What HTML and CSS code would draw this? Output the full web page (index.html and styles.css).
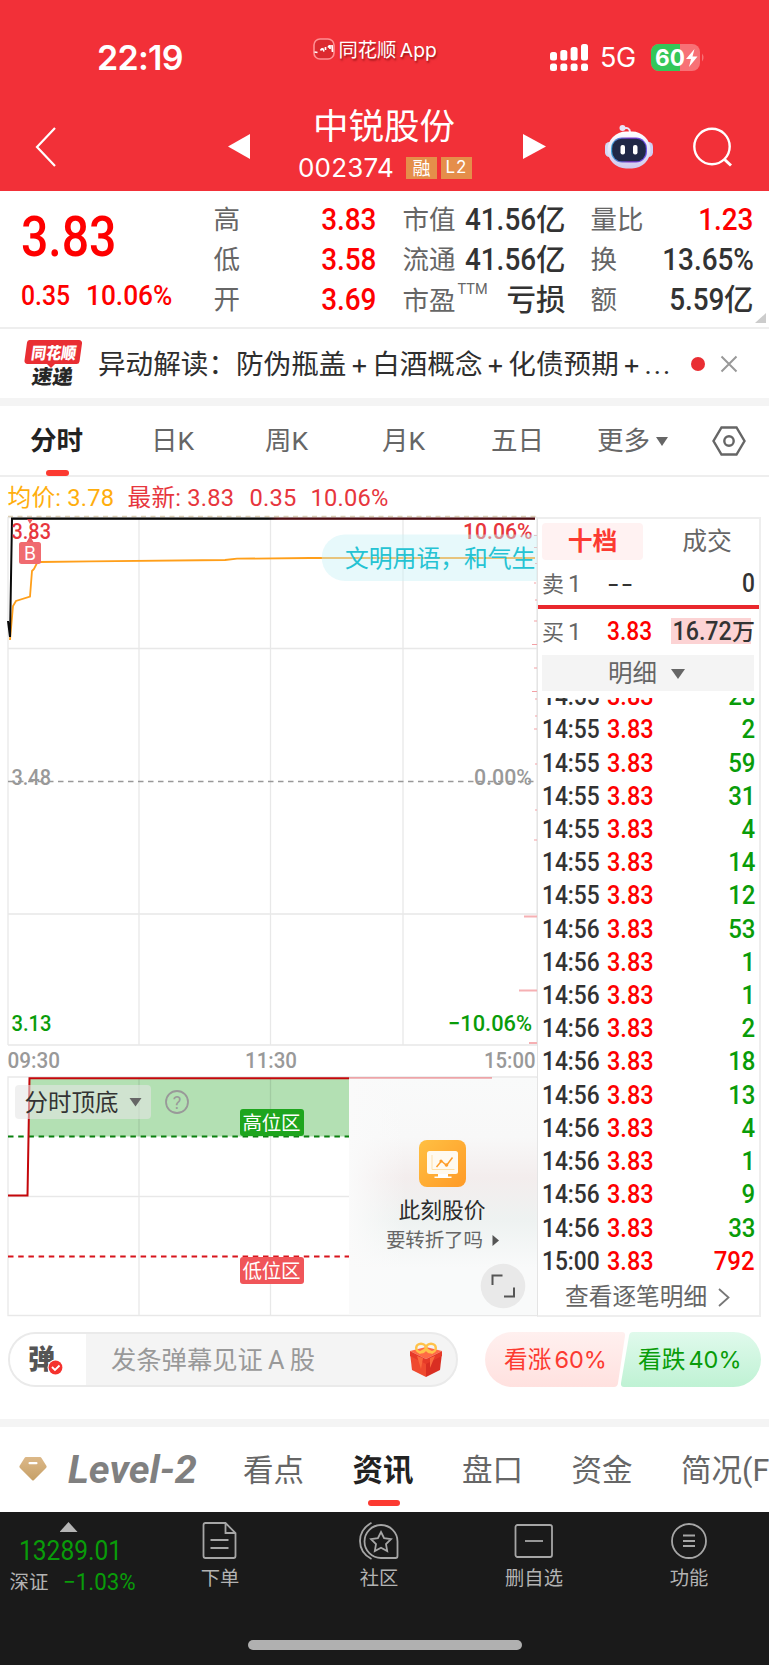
FILE: index.html
```html
<!DOCTYPE html>
<html lang="zh-CN">
<head>
<meta charset="utf-8">
<title>中锐股份 002374</title>
<link rel="stylesheet" href="styles.css">
</head>
<body>
<header class="header">
  <div class="status">
    <span class="clock">22:19</span>
    <div class="app-name">
      <svg width="22" height="22" viewBox="0 0 22 22"><rect x="1" y="1" width="20" height="20" rx="6" fill="#dc2a30" stroke="#ff8f92" stroke-width="1.6"/><path d="M1.500 14l3 .5M7.500 12.500l1.500-2M9.500 10l1.500 3.500M12.500 9v3M15 9.500l1.500-2M17 7v4M19 7l.5 7" fill="none" stroke="#fff" stroke-width="1.700"/></svg>
      <span>同花顺 App</span>
    </div>
    <svg class="signal" width="39" height="28" viewBox="0 0 39 28" fill="#fff"><rect x="0" y="8" width="7" height="8.500" rx="2.500"/><rect x="10.300" y="6" width="7" height="10.500" rx="2.500"/><rect x="20.600" y="3" width="7" height="13.500" rx="2.500"/><rect x="31" y="0" width="7" height="16.500" rx="2.500"/><rect x="0" y="19.500" width="7" height="7.500" rx="2.500"/><rect x="10.300" y="19.500" width="7" height="7.500" rx="2.500"/><rect x="20.600" y="19.500" width="7" height="7.500" rx="2.500"/><rect x="31" y="19.500" width="7" height="7.500" rx="2.500"/></svg>
    <span class="net">5G</span>
    <svg class="battery" width="54" height="27" viewBox="0 0 54 27"><defs><clipPath id="bat"><rect width="49" height="27" rx="8"/></clipPath></defs><g clip-path="url(#bat)"><rect width="49" height="27" fill="#f77176"/><rect width="29" height="27" fill="#34c759"/></g><path d="M51 9.500q3 4 0 8z" fill="#f77176"/><text x="4" y="21.500" textLength="30" lengthAdjust="spacingAndGlyphs" font-family="Inter" font-weight="700" font-size="22.500" fill="#fff">60</text><path d="M43.500 5L35 15h5l-2 8 8.500-10.500h-5z" fill="#fff"/></svg>
  </div>
  <nav class="nav">
    <svg class="back" width="22" height="40" viewBox="0 0 22 40" fill="none" stroke="#fff" stroke-width="2.200"><path d="M20 1L2 20l18 19"/></svg>
    <svg class="prev" width="22" height="25" viewBox="0 0 22 25"><path d="M22 0v25L0 12.500z" fill="#fff"/></svg>
    <div class="title">
      <h1>中锐股份</h1>
      <div class="code"><span>002374</span><b>融</b><b class="lv">L2</b></div>
    </div>
    <svg class="next" width="23" height="25" viewBox="0 0 23 25"><path d="M0 0v25l23-12.500z" fill="#fff"/></svg>
    <svg class="robot" width="48" height="44" viewBox="0 0 48 44">
      <defs><linearGradient id="rb" x1="0" y1="0" x2="0" y2="1"><stop offset="0" stop-color="#fff"/><stop offset="1" stop-color="#cfc9ee"/></linearGradient><linearGradient id="rf" x1="0" y1="0" x2="1" y2="0"><stop offset="0" stop-color="#3fa5d8"/><stop offset=".5" stop-color="#7a34c8"/><stop offset="1" stop-color="#6a55e8"/></linearGradient></defs>
      <path d="M18 3.500q7-2 7 4" fill="none" stroke="#eae6fa" stroke-width="2"/><circle cx="17.500" cy="3" r="3" fill="#e8e4f8"/>
      <rect x="0" y="17" width="9" height="15" rx="4.500" fill="#d3d8f4"/><rect x="39" y="17" width="9" height="15" rx="4.500" fill="#d0cef4"/>
      <rect x="2.500" y="6.500" width="43" height="37" rx="18.500" fill="url(#rb)"/><rect x="6" y="12.500" width="36" height="25" rx="11" fill="url(#rf)"/><rect x="7.200" y="13.800" width="33.600" height="22.400" rx="9.500" fill="#202846"/>
      <rect x="15.500" y="20" width="4.500" height="9.500" rx="2" fill="#fff"/><rect x="28" y="20" width="4.500" height="9.500" rx="2" fill="#fff"/>
    </svg>
    <svg class="search" width="42" height="42" viewBox="0 0 42 42" fill="none" stroke="#fff" stroke-width="2.400"><circle cx="20" cy="20.500" r="17.700"/><path d="M32 33l7 6.500" stroke-width="3"/></svg>
  </nav>
</header>

<section class="quote">
  <div class="price">
    <div class="last din">3.83</div>
    <div class="change"><span class="din">0.35</span><span class="din">10.06%</span></div>
  </div>
  <dl class="col c1">
    <dt>高</dt><dd class="red"><span class="din">3.83</span></dd>
    <dt>低</dt><dd class="red"><span class="din">3.58</span></dd>
    <dt>开</dt><dd class="red"><span class="din">3.69</span></dd>
  </dl>
  <dl class="col c2">
    <dt>市值</dt><dd><span class="din">41.56</span>亿</dd>
    <dt>流通</dt><dd><span class="din">41.56</span>亿</dd>
    <dt class="low">市盈<sup>TTM</sup></dt><dd>亏损</dd>
  </dl>
  <dl class="col c3">
    <dt>量比</dt><dd class="red"><span class="din">1.23</span></dd>
    <dt>换</dt><dd><span class="din">13.65%</span></dd>
    <dt>额</dt><dd><span class="din">5.59</span>亿</dd>
  </dl>
  <i class="corner"></i>
</section>

<section class="news">
  <div class="express">
    <svg width="60" height="50" viewBox="0 0 60 50"><path d="M5.500 1h49.500a3 3 0 0 1 3 3.500l-2.500 18a3 3 0 0 1-3 2.500H31l-4 4-4-4H3.500a3 3 0 0 1-3-3.500L3 3.500A3 3 0 0 1 5.500 1z" fill="#e92e33"/><g font-family="Noto Sans CJK SC" font-weight="900"><text transform="translate(6.500 19.500) skewX(-8)" font-size="16.500" textLength="45" lengthAdjust="spacingAndGlyphs" fill="#fff">同花顺</text><text transform="translate(7 45) skewX(-8)" font-size="20" textLength="41" lengthAdjust="spacingAndGlyphs" fill="#262626">速递</text></g></svg>
  </div>
  <p>异动解读：防伪瓶盖<i>+</i>白酒概念<i>+</i>化债预期<i>+</i><em>...</em></p>
  <span class="dot"></span>
  <svg class="close" width="18" height="18" viewBox="0 0 18 18" stroke="#999" stroke-width="2"><path d="M1.500 1.500l15 15M16.500 1.500l-15 15"/></svg>
</section>

<nav class="periods">
  <span class="on">分时</span><span>日K</span><span>周K</span><span>月K</span><span>五日</span>
  <span class="more">更多<i class="tri"></i></span>
  <svg width="34" height="30" viewBox="0 0 34 30" fill="none" stroke="#666" stroke-width="2.400"><path d="M9.500 1.500h15L32.500 15l-8 13.500h-15L1.500 15z"/><circle cx="17" cy="15" r="4.700"/></svg>
</nav>

<div class="legend"><span class="avg">均价: 3.78</span><span>最新: 3.83</span><span>0.35</span><span>10.06%</span></div>

<main class="board">
  <div class="charts">
    <svg class="chart" width="538" height="800" viewBox="0 516 538 800" font-family="Roboto, sans-serif">
      <defs>
        <linearGradient id="line" x1="0" x2="1"><stop offset=".49" stop-color="#0a0a0a"/><stop offset=".51" stop-color="#4d0c12"/></linearGradient>
        <linearGradient id="mist" x1="0" y1="0" x2="0" y2="1"><stop offset="0" stop-color="#f9fafa"/><stop offset=".25" stop-color="#f8f8f8"/><stop offset=".42" stop-color="#f3eded"/><stop offset=".6" stop-color="#eef2f1"/><stop offset=".8" stop-color="#f9fafa"/></linearGradient>
        <linearGradient id="fade" x1="0" x2="1"><stop offset="0" stop-color="#fafafa"/><stop offset=".3" stop-color="#fafafa" stop-opacity="0"/></linearGradient>
        <linearGradient id="app" x1="0" y1="0" x2="1" y2="1"><stop offset="0" stop-color="#ffc043"/><stop offset="1" stop-color="#ff9a26"/></linearGradient>
      </defs>
      <g fill="none" stroke="#e8e8e8" stroke-width="1.300">
        <path d="M8 517.500H537M8 1045H537V517M8 517V1045M139 517V1045M270.500 517V1045M403 517V1045M8 648.500H537M8 914H537"/>
      </g>
      <path d="M8 781.500H537" stroke="#999" stroke-width="1.500" stroke-dasharray="5.500 4.500"/>
      <path d="M8 516.500H537" stroke="#dccfb5" stroke-width="1.500" stroke-dasharray="5 4.500"/>
      <path d="M10 640L13 606 16 601 30 596.500 32 571 34 569 37 563 40 562 90 561.300 225 560 237 558.700 310 558 535 558" fill="none" stroke="#ff9f1a" stroke-width="1.800"/>
      <path d="M8 621L10 637 12 519" fill="none" stroke="#0a0a0a" stroke-width="2"/>
      <rect x="11" y="517.500" width="524" height="2.300" fill="url(#line)"/>
      <g stroke="#f3a0a4" stroke-width="1.200"><path d="M534 535.500h3M534 547.500h3M535 563.500h2M534 583h2M535 600h2M534 621h3M532 644.500h5M534 668h3M532 691.500h5M535 699h2M535 716h2M534 729h3M535 764h2M534 840h3M535 810h2"/><path d="M524 916.500h13M519 990.500h18M529 1043h8" stroke-width="2" stroke="#f6b0b3"/></g>
      <g fill="#e7363d" font-size="22.500" font-weight="500"><text x="11.500" y="539" textLength="39.500" lengthAdjust="spacingAndGlyphs">3.83</text><text x="463" y="539" textLength="69.500" lengthAdjust="spacingAndGlyphs">10.06%</text></g>
      <path d="M27 519h6l-3 5zM26 543h8l-4-7z" fill="#e7363d" opacity=".8"/>
      <rect x="19" y="542" width="22" height="22" rx="2.500" fill="#f06b70"/><text x="24" y="560" font-family="Inter" font-size="19" textLength="12" lengthAdjust="spacingAndGlyphs" fill="#fff">B</text>
      <path d="M345 534.500H537V581H345a23.250 23.250 0 0 1 0-46.500z" fill="#c9f2f7" opacity=".45"/>
      <text x="345" y="566.500" font-family="Noto Sans CJK SC" font-size="23.800" fill="#25c3d3">文明用语，和气生</text>
      <g fill="#999" font-size="22.500" font-weight="500"><text x="11.500" y="785" textLength="39.500" lengthAdjust="spacingAndGlyphs">3.48</text><text x="474" y="785" textLength="58" lengthAdjust="spacingAndGlyphs">0.00%</text></g>
      <g fill="#099c09" font-size="22.500" font-weight="500"><text x="11.500" y="1031" textLength="40" lengthAdjust="spacingAndGlyphs">3.13</text><text x="448" y="1031" textLength="84" lengthAdjust="spacingAndGlyphs">−10.06%</text></g>
      <g fill="#999" font-size="22.500" font-weight="500"><text x="7.500" y="1068" textLength="52.500" lengthAdjust="spacingAndGlyphs">09:30</text><text x="245" y="1068" textLength="52" lengthAdjust="spacingAndGlyphs">11:30</text><text x="484" y="1068" textLength="51.500" lengthAdjust="spacingAndGlyphs">15:00</text></g>

      <path d="M29 1078H349V1136.500H28.500z" fill="#b3e0b3"/>
      <path d="M8 1077H537V1315.500H8zM139 1077V1315M270.500 1077V1315M8 1196.500H349" fill="none" stroke="#000" stroke-opacity=".09" stroke-width="1.300"/>
      <path d="M8 1136.500H349" stroke="#0a800f" stroke-width="2" stroke-dasharray="5.500 4.700"/>
      <path d="M8 1256.500H349" stroke="#d8141c" stroke-width="2" stroke-dasharray="5.500 4.700"/>
      <path d="M8 1195.500H27.500L29.500 1078.300H349" fill="none" stroke="#c4070b" stroke-width="2"/>
      <rect x="15" y="1085" width="136" height="34" rx="4" fill="#e6e6e6" fill-opacity=".58"/>
      <g font-family="Noto Sans CJK SC">
        <text x="24.500" y="1111" font-size="23.500" textLength="94" fill="#333">分时顶底</text>
        <rect x="240" y="1109" width="64" height="27" rx="3" fill="#1ea51e"/><text x="242.500" y="1130" font-size="19.500" textLength="58" fill="#fff">高位区</text>
        <rect x="240" y="1257" width="64" height="27" rx="3" fill="#f05559"/><text x="242.500" y="1277.500" font-size="19.500" textLength="58" fill="#fff">低位区</text>
      </g>
      <path d="M129.500 1098h12l-6 8.500z" fill="#666"/>
      <circle cx="177" cy="1102" r="11" fill="none" stroke="#999" stroke-width="1.800"/><text x="177" y="1108.500" text-anchor="middle" font-size="18" fill="#999">?</text>

      <rect x="349" y="1078" width="188" height="237" fill="url(#mist)"/><rect x="349" y="1078" width="188" height="237" fill="url(#fade)"/>
      <path d="M349 1077.800H492" stroke="#eda4a8" stroke-width="1.800"/>
      <rect x="419" y="1140" width="47" height="47" rx="8" fill="url(#app)"/>
      <rect x="427" y="1151" width="31" height="23" rx="2.500" fill="#fffaf0"/><path d="M438 1174h10v2.500h3.500v1.500h-17v-1.500h3.500z" fill="#fff"/><path d="M432 1155v14.500h22.500" fill="none" stroke="#ffe0a8"/><path d="M436.500 1167l5-6 5 4.500 6-8" fill="none" stroke="#ff9d28" stroke-width="1.500"/><circle cx="441" cy="1161" r="1.600" fill="#ff9d28"/><circle cx="446.500" cy="1165" r="1.800" fill="#ff9d28"/>
      <g font-family="Noto Sans CJK SC"><text x="398.500" y="1218" font-size="21.800" textLength="87" fill="#2b2b2b">此刻股价</text><text x="386" y="1247" font-size="19.500" textLength="97" fill="#666">要转折了吗</text></g>
      <path d="M492.500 1235v11l6.500-5.500z" fill="#555"/>
      <circle cx="503" cy="1286" r="22.300" fill="#e9e9e9"/><path d="M492.500 1285v-9.500h10M514 1287.500v9h-10" fill="none" stroke="#555" stroke-width="2"/>
    </svg>
  </div>

  <aside class="depth">
    <div class="switch"><span class="on">十档</span><span>成交</span></div>
    <div class="lvl"><span class="k">卖<i>1</i></span><span class="p none">--</span><span class="v din">0</span></div>
    <div class="rule"></div>
    <div class="lvl buy"><span class="k">买<i>1</i></span><span class="p din red">3.83</span><span class="v"><span class="din">16.72</span>万</span></div>
    <div class="detail">明细<i class="tri"></i></div>
    <div class="ticks">
      <div><span class="din">14:55</span><span class="din p">3.83</span><span class="din g">28</span></div>
      <div><span class="din">14:55</span><span class="din p">3.83</span><span class="din g">2</span></div>
      <div><span class="din">14:55</span><span class="din p">3.83</span><span class="din g">59</span></div>
      <div><span class="din">14:55</span><span class="din p">3.83</span><span class="din g">31</span></div>
      <div><span class="din">14:55</span><span class="din p">3.83</span><span class="din g">4</span></div>
      <div><span class="din">14:55</span><span class="din p">3.83</span><span class="din g">14</span></div>
      <div><span class="din">14:55</span><span class="din p">3.83</span><span class="din g">12</span></div>
      <div><span class="din">14:56</span><span class="din p">3.83</span><span class="din g">53</span></div>
      <div><span class="din">14:56</span><span class="din p">3.83</span><span class="din g">1</span></div>
      <div><span class="din">14:56</span><span class="din p">3.83</span><span class="din g">1</span></div>
      <div><span class="din">14:56</span><span class="din p">3.83</span><span class="din g">2</span></div>
      <div><span class="din">14:56</span><span class="din p">3.83</span><span class="din g">18</span></div>
      <div><span class="din">14:56</span><span class="din p">3.83</span><span class="din g">13</span></div>
      <div><span class="din">14:56</span><span class="din p">3.83</span><span class="din g">4</span></div>
      <div><span class="din">14:56</span><span class="din p">3.83</span><span class="din g">1</span></div>
      <div><span class="din">14:56</span><span class="din p">3.83</span><span class="din g">9</span></div>
      <div><span class="din">14:56</span><span class="din p">3.83</span><span class="din g">33</span></div>
      <div><span class="din">15:00</span><span class="din p">3.83</span><span class="din g up">792</span></div>
    </div>
    <div class="all">查看逐笔明细<svg width="12" height="19" viewBox="0 0 12 19" fill="none" stroke="#777" stroke-width="1.800"><path d="M1 1l9.500 8.500L1 18"/></svg></div>
  </aside>
</main>

<section class="chat">
  <div class="input">
    <div class="toggle"><svg width="76" height="51" viewBox="0 0 76 51"><text x="18" y="34.500" font-family="Noto Sans CJK SC" font-weight="900" font-size="27" fill="#555">弹</text><circle cx="45.500" cy="33.500" r="8" fill="#fff"/><circle cx="45.500" cy="33.500" r="6.900" fill="#f5322e"/><path d="M42 33l3 3 4.500-4.500" fill="none" stroke="#fff" stroke-width="1.800"/></svg></div>
    <span>发条弹幕见证 A 股</span>
    <svg class="gift" width="34" height="36" viewBox="0 0 34 36"><path d="M1 11l16 7v17L3 28z" fill="#ef4a2f"/><path d="M33 11l-16 7v17l14-7z" fill="#d92e22"/><path d="M1 9l16-4 16 4-16 8z" fill="#ff6a45"/><path d="M1 9v5l16 8v-5zM33 9v5l-16 8v-5z" fill="#e63a28"/><path d="M8 14l4 13 2-11zM26 14l-5 12v-10z" fill="#fa6a3d"/><g fill="none" stroke="#ffc24a" stroke-width="2.500"><ellipse cx="12" cy="6" rx="4.800" ry="4.300"/><ellipse cx="22" cy="6" rx="4.800" ry="4.300"/><path d="M17 7l-7 4M17 7l7 4"/></g></svg>
  </div>
  <div class="vote">
    <svg class="shape" width="276" height="55" viewBox="0 0 276 55"><defs><linearGradient id="up" x2="0" y2="1"><stop stop-color="#fff0ef"/><stop offset="1" stop-color="#ffe1df"/></linearGradient><linearGradient id="dn" x2="0" y2="1"><stop stop-color="#e0faec"/><stop offset="1" stop-color="#bff2d4"/></linearGradient></defs><path d="M27.500 0H137q3.500 0 3 4L133 51q-.5 4-4 4H27.500a27.500 27.500 0 0 1 0-55z" fill="url(#up)"/><path d="M248.500 0H148q-3.500 0-4 4l-8 47q-.5 4 3 4h109.500a27.500 27.500 0 0 0 0-55z" fill="url(#dn)"/></svg>
    <span class="bull">看涨<i>60%</i></span><span class="bear">看跌<i>40%</i></span>
  </div>
</section>

<nav class="sections">
  <svg class="gem" width="28" height="24" viewBox="0 0 28 24"><defs><linearGradient id="gem" x2="0" y2="1"><stop stop-color="#dcb888"/><stop offset="1" stop-color="#c6a067"/></linearGradient></defs><path d="M7 0h14q1 0 1.500 1l5 8q.5 1-.5 2L15 23q-1 1-2 0L1 11q-1-1-.5-2l5-8Q6 0 7 0z" fill="url(#gem)"/><rect x="9.500" y="5" width="9" height="2.200" rx="1" fill="#fff"/></svg>
  <svg class="level" width="134" height="36" viewBox="0 0 134 36"><text x="1" y="31" font-family="Roboto" font-weight="700" font-style="italic" font-size="38" textLength="129" lengthAdjust="spacingAndGlyphs" fill="#808080">Level-2</text></svg>
  <span>看点</span><span class="on">资讯</span><span>盘口</span><span>资金</span><span class="last-tab">简况(F10)</span>
</nav>

<footer class="toolbar">
  <div class="index">
    <i class="up-tri"></i>
    <span class="din big">13289.01</span>
    <div><em>深证</em><span class="din">−1.03%</span></div>
  </div>
  <div class="tool t1"><svg width="36" height="38" viewBox="0 0 36 38" fill="none" stroke="#a6a6a6" stroke-width="1.800"><path d="M1.500 3q0-2 2-2H23.500L33.500 11v23q0 2-2 2h-28q-2 0-2-2zM23.500 1v10h10M8.500 18h18M8.500 26h18"/></svg><span>下单</span></div>
  <div class="tool t2"><svg width="42" height="38" viewBox="0 0 42 38" fill="none" stroke="#a6a6a6" stroke-width="1.800"><path d="M23 3a16.500 16.500 0 0 0 0 33h14.500q2 0 2-2V19.500A16.500 16.500 0 0 0 23 3zM13.500 .800Q2 7 2 19t11.500 18"/><path d="M23 10l3.100 6.200 6.900 1-5 4.900 1.200 6.900-6.200-3.300-6.200 3.300 1.200-6.900-5-4.900 6.900-1z"/></svg><span>社区</span></div>
  <div class="tool t3"><svg width="40" height="38" viewBox="0 0 40 38" fill="none" stroke="#a6a6a6" stroke-width="1.800"><rect x="1.500" y="3" width="36.500" height="32" rx="2"/><path d="M11 19h18"/></svg><span>删自选</span></div>
  <div class="tool t4"><svg width="38" height="38" viewBox="0 0 38 38" fill="none" stroke="#a6a6a6" stroke-width="1.800"><circle cx="19" cy="19" r="17"/><path d="M13 13.500h12M13 19h12M13 24h12"/></svg><span>功能</span></div>
  <i class="home"></i>
</footer>
</body>
</html>
```

FILE: styles.css
```css
* { box-sizing: border-box; }
body {
  margin: 0; width: 769px; height: 1665px; overflow: hidden; background: #fff; color: #333;
  font-family: Roboto, "Noto Sans CJK SC", sans-serif;
}
svg { display: block; flex: none; }
i, em { font-style: normal; }
.red { color: #fe0000; }
.din { display: inline-block; font-family: Roboto, sans-serif; font-weight: 500; transform: scaleX(.91); transform-origin: left; white-space: nowrap; }

/* header */
.header { height: 191px; background: #f23038; color: #fff; }
.status { display: flex; align-items: flex-start; height: 102px; padding: 37px 64px 0 97px; }
.clock { width: 216px; margin-top: 1px; font: 600 34px/40px Inter, sans-serif; letter-spacing: -.7px; }
.app-name { display: flex; align-items: center; gap: 4px; width: 238px; height: 24px; font: 19.300px/24px Inter, "Noto Sans CJK SC", sans-serif; text-shadow: 1px 2px 2px rgba(90,0,0,.55); white-space: nowrap; word-spacing: -2px; }
.app-name span { padding-top: 1px; }
.signal { margin-top: 7px; }
.net { width: 38px; margin: 1px 0 0 11px; font: 27px/40px Inter, sans-serif; letter-spacing: -.5px; }
.battery { margin: 7px 0 0 13px; }
.nav { display: flex; align-items: center; height: 89px; padding-left: 35px; }
.prev { margin-left: 171px; }
.title { width: 273px; text-align: center; }
.title h1 { margin: -8px 0 6px; font: 400 35.500px/44px "Noto Sans CJK SC", sans-serif; padding-right: 5px; }
.code { display: flex; align-items: center; height: 32px; padding-left: 48px; font: 26px/32px Inter, sans-serif; }
.code span { width: 98px; text-align: left; letter-spacing: .2px; }
.code b { width: 31px; height: 22px; margin: 1px 0 0 10px; background: #e58e4a; font: 400 18px/21px "Noto Sans CJK SC", sans-serif; }
.code .lv { margin-left: 4px; font-family: Inter, sans-serif; font-size: 17px; letter-spacing: 1px; }
.robot { margin-left: 59px; }
.search { margin-left: 39px; }

/* quote */
.quote { position: relative; display: grid; grid-template-columns: 193px 211px 188px 176px; height: 138px; padding-left: 20.500px; border-bottom: 2px solid #eee; }
.price { color: #fe0000; }
.last { margin-top: 12px; font-size: 56px; line-height: 68px; transform: scaleX(.86); }
.change { display: flex; margin-top: 8px; font-size: 27.500px; line-height: 34px; }
.change span:first-child { width: 65px; transform: scaleX(.9); }
.change span:last-child { transform: scaleX(.955); }
.col { display: grid; grid-template-columns: 54px 1fr; grid-template-rows: 40px 39.500px 40px; align-content: start; margin: 9px 0 0; line-height: 40px; width: 163px; }
.c2, .c3 { margin-left: -22px; }
.col dt { color: #666; font-size: 26.500px; white-space: nowrap; }
.col .low { padding-top: 1px; }
.col sup { display: inline-block; margin-left: 2px; font-size: 14.500px; line-height: 14px; vertical-align: 16px; }
.col dd { margin: 0; text-align: right; font-size: 29.500px; font-weight: 500; white-space: nowrap; }
.col .din { font-size: 31px; transform: scaleX(.9); transform-origin: right; }
.corner { position: absolute; right: 3px; bottom: 4px; width: 11px; height: 10px; background: #ccc; clip-path: polygon(100% 0, 100% 100%, 0 100%); }

/* news */
.news { display: flex; align-items: center; height: 69px; padding-left: 24px; }
.news p { width: 592px; margin: 1px 0 0 14px; font-size: 27.600px; line-height: 36px; white-space: nowrap; color: #2e2e2e; }
.news p i { display: inline-block; width: 25.800px; text-align: center; font-family: Inter, sans-serif; font-size: 27.600px; }
.news em { letter-spacing: 2px; }
.dot { width: 14px; height: 14px; margin-left: 1px; border-radius: 7px; background: #e92e33; }
.close { margin-left: 15px; }

/* periods */
.periods { display: flex; align-items: center; height: 79px; border-top: 8px solid #f4f4f4; border-bottom: 2px solid #eee; color: #666; font-size: 26.500px; line-height: 40px; padding-left: 30px; white-space: nowrap; }
.periods span { width: 114px; padding-top: 1px; }
.periods span:nth-child(1) { width: 121px; }
.periods span:nth-child(3) { width: 117px; }
.periods span:nth-child(4) { width: 109px; }
.periods span:nth-child(5) { width: 106px; }
.periods .on { position: relative; color: #222; font-weight: 700; }
.periods .on::after { content: ""; position: absolute; left: 16px; bottom: -15px; width: 23px; height: 6px; border-radius: 3px; background: #fc3a31; }
.tri { display: inline-block; width: 12px; height: 9px; background: #666; clip-path: polygon(0 0, 100% 0, 50% 100%); }
.more .tri { margin: 0 0 4px 6px; }
.periods .more { width: 115px; }

.legend { display: flex; height: 39px; padding: 2px 0 0 7.500px; color: #e7363d; font-size: 23.700px; line-height: 38px; white-space: nowrap; }
.legend span { width: 61px; letter-spacing: .2px; }
.legend span:nth-child(2) { width: 122px; }
.legend .avg { width: 120px; color: #ffae0d; }

/* board */
.board { display: flex; height: 800px; }
.charts { width: 537px; }
.chart { overflow: visible; }
.depth { width: 224px; height: 800px; border: 2px solid #eee; border-left: 1px solid #e4e4e4; margin-top: 1px; }
.switch { display: flex; gap: 7px; height: 41px; padding: 4px 0 0 4px; font-size: 24.800px; line-height: 37px; color: #666; }
.switch span { width: 102px; text-align: center; }
.switch span:last-child { width: 110px; padding-left: 5px; }
.switch .on { height: 37px; border-radius: 4px; background: #fff2f2; color: #fc3a31; font-weight: 700; }
.lvl { display: grid; grid-template-columns: 65px 61px 87px; height: 45px; padding: 2px 0 0 4px; font-size: 25px; line-height: 44px; color: #333; }
.k { color: #666; font-size: 22px; }
.k i { margin-left: 4px; font-size: 24px; }
.none { font-weight: 500; letter-spacing: 1px; font-family: Inter, sans-serif; font-size: 20px; transform: scaleX(1.35); transform-origin: left; }
.lvl .v { text-align: right; transform-origin: right; white-space: nowrap; }
.rule { height: 4px; background: #e9282d; }
.lvl.buy { padding-top: 1px; }
.buy .v { align-self: start; height: 26px; margin: 8px 0 0 0; line-height: 27px; font-weight: 500; font-size: 23px; background: linear-gradient(90deg, transparent 3px, #fcd3d4 3px, #fcd3d4 83px, transparent 83px); }
.buy .v .din { font-size: 25px; transform-origin: right; transform: scaleX(.93); }
.detail { height: 36px; margin: 1px 5px 0 4px; padding-right: 3px; background: #f4f4f4; text-align: center; color: #666; font-size: 24.500px; line-height: 37px; }
.detail .tri { width: 14px; height: 10px; margin: 0 0 3px 14px; }
.ticks { display: flex; flex-direction: column; justify-content: flex-end; height: 580px; margin-top: 7px; overflow: hidden; font-size: 25px; line-height: 33.220px; }
.ticks div { display: grid; flex: none; height: 33.220px; grid-template-columns: 65px 1fr auto; padding: 0 4px 0 3.500px; }
.ticks .p { color: #fe0000; transform: scaleX(.94); }
.ticks .g { color: #099c09; transform-origin: right; transform: scaleX(.96); }
.ticks .up { color: #fe0000; }
.all { display: flex; align-items: center; height: 36px; padding: 2px 0 0 27px; color: #666; font-size: 23.700px; line-height: 34px; }
.all svg { margin-left: 11px; }

/* chat */
.chat { display: flex; height: 103px; padding: 16px 0 0 8px; }
.input { display: flex; align-items: center; width: 450px; height: 55px; border: 2px solid #eaeaea; border-radius: 28px; background: #f4f4f4; overflow: hidden; color: #999; font-size: 25.300px; }
.toggle { flex: none; width: 76px; height: 51px; background: #fff; }
.input span { flex: none; width: 322px; padding: 0 0 4px 25px; white-space: nowrap; word-spacing: -1px; }
.gift { margin-left: 1px; }
.vote { position: relative; width: 276px; height: 55px; margin-left: 27px; display: grid; grid-template-columns: 134px 122px; padding-left: 19px; font-size: 23.700px; line-height: 55px; white-space: nowrap; }
.vote .shape { position: absolute; left: 0; top: 0; z-index: -1; }
.vote i { margin-left: 3px; font-family: Inter, sans-serif; font-size: 23.500px; }
.bull { color: #fc3a31; } .bear { color: #099c09; }

/* sections */
.sections { display: flex; align-items: center; height: 94px; border-top: 8px solid #f4f4f4; padding-left: 19px; color: #666; font-size: 30.500px; line-height: 40px; white-space: nowrap; overflow: hidden; }
.gem { margin-top: -2px; }
.level { margin: 0 42px 0 20px; }
.sections span { flex: none; width: 109.500px; padding-top: 1px; }
.sections .on { position: relative; color: #222; font-weight: 700; }
.sections .on::after { content: ""; position: absolute; left: 15px; bottom: -15px; width: 32px; height: 6px; border-radius: 3px; background: #fc3a31; }

/* toolbar */
.toolbar { position: relative; display: flex; height: 153px; margin-top: -1px; padding-top: 1px; background: #1a1a1a; color: #b3b3b3; font-size: 19.300px; line-height: 26px; box-shadow: 0 1px 0 #1a1a1a; }
.index { width: 184px; height: 100px; padding: 9px 0 0 9.500px; color: #099c09; }
.up-tri { display: block; width: 18px; height: 10px; margin-left: 50px; background: #b5b5b5; clip-path: polygon(50% 0, 100% 100%, 0 100%); }
.index .big { display: block; margin: 2px 0 0 9px; font-size: 27px; line-height: 34px; font-weight: 400; transform: scaleX(.91); }
.index div { display: flex; margin-top: 2px; font-size: 23px; line-height: 26px; }
.index div span { font-weight: 400; transform: scaleX(.97); }
.index em { width: 53px; color: #b3b3b3; font-size: 19.500px; }
.tool { display: flex; flex-direction: column; align-items: center; gap: 6px; padding-top: 9px; }
.t1 { width: 72px; } .t2 { width: 80px; margin-left: 83px; } .t3 { width: 80px; margin-left: 75px; } .t4 { width: 80px; margin-left: 75px; }
.home { position: absolute; left: 248px; bottom: 15px; width: 274px; height: 10px; border-radius: 5px; background: #b0b0b0; }
```
